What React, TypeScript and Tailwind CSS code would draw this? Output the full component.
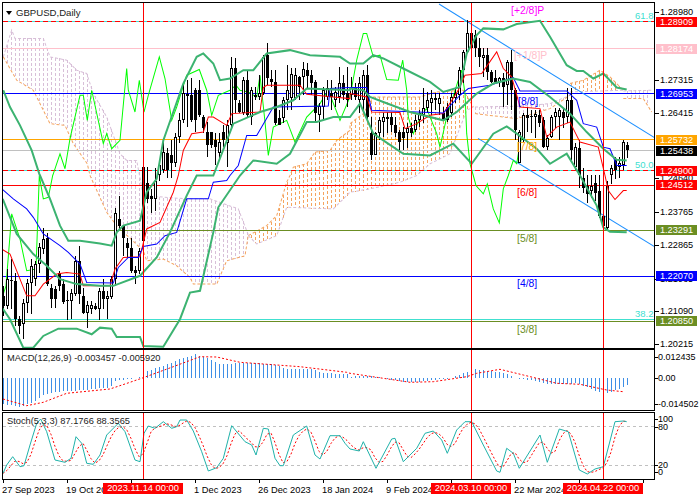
import React from "react";

type P = [number, number];
const seg = (ox: number, oy: number, a: number[]): P[] => {
  const r: P[] = [];
  for (let i = 0; i < a.length; i += 2) r.push([ox + a[i] / 3, oy + a[i + 1] / 3]);
  return r;
};
const str = (p: P[]) => p.map((q) => `${q[0].toFixed(1)},${q[1].toFixed(1)}`).join(" ");
const interp = (p: P[], x: number) => {
  if (x <= p[0][0]) return p[0][1];
  for (let i = 1; i < p.length; i++) {
    if (x <= p[i][0]) {
      const d = p[i][0] - p[i - 1][0];
      return d === 0 ? p[i][1] : p[i - 1][1] + ((p[i][1] - p[i - 1][1]) * (x - p[i - 1][0])) / d;
    }
  }
  return p[p.length - 1][1];
};

const upper = [
  ...seg(0, 0, [10, 270, 30, 320, 60, 375, 95, 450, 118, 520]),
  ...seg(0, 175, [120, 0, 150, 70, 180, 150, 205, 195, 240, 195, 300, 203, 335, 210, 350, 170, 370, 150, 420, 135, 440, 50, 470, 10]),
  ...seg(0, 0, [490, 420, 550, 250, 590, 170, 610, 160, 640, 190, 660, 240, 690, 235, 730, 210, 760, 210, 800, 160, 870, 150, 930, 165, 1020, 170, 1050, 190]),
  ...seg(350, 0, [0, 190, 40, 190, 70, 165, 100, 175, 160, 205, 240, 245, 280, 275, 330, 260, 350, 160, 380, 105, 400, 85, 460, 88, 500, 72, 570, 62, 600, 110, 650, 195, 680, 212, 700, 212, 730, 235, 760, 220, 800, 262, 830, 268]),
];
const middle = [
  ...seg(0, 175, [8, 70, 50, 175, 100, 235, 140, 270, 180, 310, 230, 325, 300, 330, 340, 330, 420, 300, 470, 245, 510, 170, 560, 60, 590, 0]),
  ...seg(0, 0, [640, 440 + 85, 700, 370, 780, 335, 830, 320, 880, 300, 920, 265, 1050, 270]),
  ...seg(350, 0, [0, 265, 40, 270, 60, 290, 100, 305, 180, 335, 280, 360, 320, 335, 380, 280, 430, 250, 490, 235, 540, 245, 600, 290, 660, 340, 710, 395, 760, 445, 800, 478, 830, 480]),
];
const lower = [
  ...seg(0, 175, [8, 398, 30, 430, 70, 515, 100, 515, 130, 480, 175, 458, 230, 458, 275, 475, 300, 455, 335, 458, 350, 483, 420, 483, 430, 510, 490, 512, 540, 430, 570, 350, 600, 345, 640, 170, 655, 95, 720, 0]),
  ...seg(0, 0, [760, 480, 830, 490, 870, 460, 920, 365, 950, 365, 1000, 350, 1050, 350]),
  ...seg(350, 0, [0, 350, 30, 310, 70, 400, 100, 420, 160, 460, 240, 465, 310, 430, 365, 490, 430, 400, 470, 378, 500, 400, 560, 445, 600, 490, 650, 460, 690, 525]),
  ...seg(350, 175, [740, 90, 760, 155, 780, 168, 830, 170]),
];
const tenkan = [
  ...seg(0, 175, [8, 222, 30, 235, 60, 310, 80, 360, 105, 360, 130, 325, 170, 295, 200, 290, 240, 295, 250, 330, 330, 330, 345, 280, 370, 245, 420, 243, 440, 160, 480, 140, 520, 50, 535, 0]),
  ...seg(0, 0, [550, 450, 575, 400, 610, 395, 625, 350, 640, 350, 680, 375, 695, 340, 780, 335, 790, 262, 800, 255, 900, 255, 920, 282, 1000, 290, 1050, 295]),
  ...seg(350, 0, [0, 280, 50, 290, 65, 335, 150, 337, 165, 385, 200, 370, 240, 345, 280, 340, 325, 270, 345, 225, 395, 220, 440, 155, 460, 205, 485, 230, 510, 320, 570, 325, 590, 410, 620, 380, 660, 365, 690, 425, 745, 440, 765, 525]),
  ...seg(350, 175, [775, 45, 795, 72, 820, 45, 830, 45]),
];
const kijun = [
  ...seg(0, 175, [8, 42, 40, 70, 80, 100, 100, 125, 130, 175, 180, 210, 205, 230, 240, 265, 260, 320, 340, 322, 355, 275, 385, 245, 415, 245, 430, 212, 470, 205, 495, 180, 530, 170, 560, 70, 625, 70, 640, 20, 680, 15, 690, 0]),
  ...seg(0, 0, [715, 495, 740, 405, 770, 405, 820, 320, 985, 317, 990, 265, 1050, 262]),
  ...seg(350, 0, [0, 262, 50, 262, 65, 330, 280, 338, 330, 285, 355, 265, 420, 255, 490, 232, 510, 272, 650, 272, 680, 300, 700, 370, 740, 380, 760, 440, 780, 445, 800, 495, 830, 495]),
];
const lime = [
  ...seg(0, 175, [8, 360, 18, 330, 35, 115, 60, 190, 80, 285, 108, 280, 118, 0, 130, 70, 145, 65, 158, 0]),
  ...seg(0, 0, [160, 520, 180, 460, 195, 505, 210, 415, 240, 285, 250, 285, 262, 360, 275, 270, 310, 430, 320, 400, 335, 445, 360, 420, 380, 205, 385, 270, 405, 335, 418, 240, 432, 335, 445, 285, 478, 170, 495, 235, 515, 360, 530, 320, 560, 225, 598, 208, 620, 270, 635, 345, 655, 285, 690, 270, 708, 255, 720, 270, 745, 275, 770, 290, 780, 225, 795, 365, 805, 465, 820, 380, 860, 360, 885, 425, 920, 350, 960, 310, 985, 270, 1020, 360, 1050, 290]),
  ...seg(350, 0, [20, 180, 40, 100, 50, 100, 70, 170, 90, 165, 110, 238, 145, 240, 158, 180, 170, 270, 175, 350, 190, 400, 215, 340, 230, 325, 260, 400, 270, 440, 290, 350, 325, 240, 335, 210, 345, 280, 350, 400, 360, 490, 370, 525]),
  ...seg(350, 175, [378, 30, 400, 55, 412, 25, 430, 100, 448, 142, 460, 40, 475, 0]),
  ...seg(350, 0, [490, 480, 500, 490, 510, 430, 520, 400]),
];

type Cloud = { up: P[]; lo: P[]; color: string; upColor: string; loColor: string };
const clouds: Cloud[] = [
  {
    up: [
      ...seg(0, 0, [10, 170, 35, 90, 45, 115, 130, 115, 150, 170, 200, 180, 230, 210, 260, 220, 280, 280, 320, 350, 360, 460, 380, 480, 410, 480]),
      ...seg(0, 175, [430, 60, 560, 70, 630, 70, 715, 100, 745, 178]),
    ],
    lo: [
      ...seg(0, 0, [10, 170, 50, 240, 100, 270, 150, 370, 195, 375, 220, 430, 262, 490]),
      ...seg(0, 175, [270, 0, 320, 110, 350, 150, 430, 225, 440, 255, 490, 250, 530, 270, 570, 305, 580, 325, 650, 325, 680, 255, 735, 240, 745, 178]),
    ],
    color: "#d8bfd8",
    upColor: "#d8bfd8",
    loColor: "#f4a460",
  },
  {
    up: [
      ...seg(0, 175, [745, 180, 800, 150, 830, 120, 860, 20, 870, 0]),
      ...seg(0, 0, [880, 500, 920, 490, 945, 455, 990, 450, 1010, 420, 1050, 390]),
      ...seg(350, 0, [0, 370, 40, 340, 70, 290, 210, 290, 260, 275, 340, 270, 370, 320]),
    ],
    lo: [
      ...seg(0, 175, [745, 180, 770, 205, 830, 180, 860, 95, 1000, 100, 1050, 50]),
      ...seg(350, 175, [60, 40, 150, 20, 200, 0]),
      ...seg(350, 0, [240, 490, 300, 460, 350, 330, 370, 320]),
    ],
    color: "#f4a460",
    upColor: "#f4a460",
    loColor: "#d8bfd8",
  },
  {
    up: seg(350, 0, [375, 320, 500, 318, 600, 310, 660, 285]),
    lo: seg(350, 0, [375, 340, 500, 355, 600, 325, 660, 285]),
    color: "#d8bfd8",
    upColor: "#d8bfd8",
    loColor: "#f4a460",
  },
  {
    up: seg(350, 0, [660, 250, 700, 240, 750, 210, 780, 230, 820, 270]),
    lo: seg(350, 0, [660, 275, 820, 270]),
    color: "#f4a460",
    upColor: "#f4a460",
    loColor: "#d8bfd8",
  },
  {
    up: seg(350, 0, [820, 272, 905, 270]),
    lo: seg(350, 0, [820, 295, 880, 295, 905, 335]),
    color: "#d8bfd8",
    upColor: "#d8bfd8",
    loColor: "#f4a460",
  },
];

const candleC = [
  10,360,390,0,330,420, 22,310,390,1,280,400, 34,312,316,0,250,400, 46,315,430,0,290,450, 58,430,450,0,420,475, 70,380,445,1,370,490,
  82,320,380,1,310,410, 94,270,320,1,250,415, 106,265,310,1,255,330, 118,212,265,1,200,290, 130,190,220,1,155,235, 142,185,325,0,170,330,
  154,335,370,0,325,395, 166,340,370,0,330,395, 178,290,330,0,285,345, 190,325,378,0,310,385, 202,372,376,0,345,432, 214,350,375,1,340,430,
  226,255,355,1,240,360, 238,255,355,0,210,385, 250,360,410,0,335,415, 262,388,410,1,375,455, 274,388,400,1,375,415, 286,390,398,0,380,402,
  298,345,398,1,335,432, 310,345,368,0,310,400, 322,360,368,1,345,430, 334,310,362,1,300,370, 346,110,310,1,95,330, 358,130,150,0,60,160,
  370,150,185,0,148,240, 382,200,215,0,185,245, 394,215,285,0,185,290, 406,282,290,0,270,325, 418,225,285,1,215,295, 430,-24,195,0,-30,225,
  442,20,70,0,-24,80, 454,60,68,0,40,110, 466,15,70,1,-20,105,
];
const candleA = [
  478,495,525,1,490,540, 490,455,510,1,425,520, 502,460,510,0,445,530, 514,465,490,0,420,530, 526,410,490,1,400,500, 538,360,410,1,340,430,
  550,280,360,1,250,370, 562,283,287,0,240,380, 574,285,360,0,235,365, 586,270,360,0,265,395, 598,270,345,0,240,350, 610,350,385,0,345,400,
  622,395,435,0,365,470, 634,395,435,0,395,445, 646,420,440,0,400,495, 658,425,460,1,400,475, 670,395,420,0,375,440, 682,375,430,1,360,500,
  694,205,375,1,170,380, 706,205,300,0,175,340, 718,310,335,0,300,340, 730,240,340,1,230,345, 742,240,345,0,210,350, 754,270,350,1,260,375,
  766,285,292,1,260,300, 778,280,290,1,225,300, 790,170,280,1,165,285, 802,165,235,0,130,255, 814,238,245,0,210,260, 826,245,370,0,210,375,
  838,355,375,0,330,375, 850,300,355,1,290,370, 862,270,300,1,195,330, 874,222,295,1,205,330, 886,225,295,1,205,300, 898,230,260,0,228,300,
  910,208,230,1,185,285, 922,210,228,0,190,265, 934,225,250,0,210,285, 946,245,340,0,240,370, 958,318,345,1,310,395, 970,270,320,1,260,360,
  982,265,290,1,240,300, 994,280,290,0,240,330, 1006,275,300,1,260,320, 1018,250,290,1,200,310, 1030,250,285,0,225,300, 1042,280,300,0,200,320,
];
const candleB = [
  4,265,285,1,230,300, 16,265,290,0,250,300, 28,250,300,1,230,340, 40,225,300,1,210,330, 52,225,350,0,195,365, 64,400,465,0,350,480,
  76,400,465,1,395,465, 88,360,400,1,350,420, 100,352,365,1,340,410, 112,350,356,0,335,400, 124,352,375,0,335,395, 136,375,400,0,350,410,
  148,395,425,0,390,450, 160,395,415,0,380,450, 172,385,400,1,370,445, 184,385,400,0,370,410, 196,360,390,1,345,395, 208,340,360,1,330,380,
  220,325,345,1,265,370, 232,300,325,1,275,340, 244,295,310,1,270,345, 256,293,300,0,280,330, 268,295,312,1,280,345, 280,340,360,0,320,360,
  292,320,360,0,310,365, 304,290,340,1,280,350, 316,280,295,1,265,310, 328,210,285,1,200,300, 340,155,210,1,150,250, 352,100,155,1,60,160,
  364,100,145,0,85,175, 376,105,145,0,90,170, 388,145,170,0,115,200, 400,165,175,1,145,230, 412,165,215,0,145,240, 424,215,245,0,210,250,
  436,235,245,0,210,250, 448,235,245,1,230,260, 460,235,260,0,220,320, 472,185,255,1,180,315, 484,185,270,0,150,330, 496,270,390,0,265,420,
  508,395,490,1,390,490, 520,345,420,1,340,425, 532,345,355,0,320,395, 544,348,352,0,330,400, 556,342,350,1,330,415, 568,345,370,0,330,380,
  580,360,440,0,350,445, 592,415,440,1,405,450, 604,350,410,1,345,415, 616,335,350,1,325,385, 628,330,350,1,325,420, 640,335,355,0,325,385,
  652,300,350,1,265,370, 664,300,450,0,265,480, 676,440,500,1,430,510, 688,445,525,0,420,560,
  700,530,560,0,505,575, 712,555,580,0,525,605, 724,555,570,1,525,590, 736,545,575,0,525,600, 748,570,645,0,525,650, 760,645,675,0,640,685,
  772,555,680,1,540,690, 784,505,525,1,495,550, 796,480,510,0,470,535, 808,490,500,1,470,530, 820,425,495,1,420,510, 832,435,450,0,425,475,
];
type C = { x: number; t: number; b: number; h: number; hi: number; lo: number };
const toC = (ox: number, oy: number, a: number[]): C[] => {
  const r: C[] = [];
  for (let i = 0; i < a.length; i += 6) {
    r.push({
      x: Math.round(ox + a[i] / 3),
      t: Math.round(oy + a[i + 1] / 3),
      b: Math.round(oy + a[i + 2] / 3),
      h: a[i + 3],
      hi: Math.round(oy + a[i + 4] / 3),
      lo: Math.round(oy + a[i + 5] / 3),
    });
  }
  return r;
};
const candles = [...toC(0, 175, candleC), ...toC(0, 0, candleA), ...toC(350, 0, candleB)];

const macdHist = [
  ...seg(0, 345, [9, 178, 60, 185, 100, 172, 130, 148, 180, 140, 250, 135, 330, 127, 345, 108, 400, 100, 430, 95, 442, 78, 490, 62, 540, 42, 585, 28, 620, 40, 660, 58, 700, 55, 780, 55, 830, 60, 860, 72, 940, 72, 960, 82, 1030, 88, 1045, 85]),
  ...seg(350, 345, [0, 95, 50, 92, 100, 98, 150, 110, 200, 112, 240, 105, 300, 100, 350, 80, 375, 72, 420, 78, 470, 85, 500, 100, 540, 105, 600, 118, 680, 115, 750, 143, 772, 143, 800, 135, 830, 120]),
];
const macdSig = [
  ...seg(0, 345, [9, 162, 80, 182, 130, 172, 200, 145, 330, 132, 390, 112, 430, 98, 520, 65, 600, 35, 650, 36, 720, 52, 900, 65, 1040, 82]),
  ...seg(350, 345, [0, 85, 100, 100, 180, 112, 250, 110, 350, 95, 380, 85, 450, 73, 520, 90, 560, 100, 620, 115, 690, 118, 770, 135, 820, 140]),
];
const stoch = [
  ...seg(0, 345, [9, 385, 20, 360, 38, 335, 60, 365, 72, 362, 90, 300, 110, 235, 122, 222, 140, 260, 165, 345, 195, 352, 213, 340, 228, 275, 245, 295, 260, 355, 280, 358, 300, 330, 320, 270, 355, 235, 375, 260, 405, 345, 420, 350, 432, 265, 445, 243, 465, 250, 490, 230, 515, 250, 530, 245, 540, 225, 560, 225, 580, 258, 605, 320, 625, 378, 650, 368, 670, 340, 695, 242, 735, 290, 755, 300, 768, 330, 790, 250, 805, 252, 825, 340, 840, 362, 850, 362, 880, 270, 920, 243, 945, 330, 960, 342, 990, 272, 1020, 272, 1035, 295]),
  ...seg(350, 345, [0, 312, 28, 318, 40, 290, 78, 370, 125, 282, 135, 280, 160, 350, 200, 310, 225, 265, 250, 258, 275, 285, 292, 325, 320, 255, 345, 230, 365, 230, 400, 300, 440, 378, 450, 382, 470, 310, 490, 325, 508, 370, 570, 270, 592, 352, 628, 252, 655, 260, 688, 375, 712, 387, 735, 372, 760, 365, 795, 230, 820, 228, 830, 230]),
];
const barXs: number[] = [];
for (let x = 3; x <= 650; x += 4) barXs.push(x);
const stochXs = barXs.filter((x) => x <= 627);
const stochSig: P[] = stochXs.map((x) => [x, (interp(stoch, x) + interp(stoch, x - 4) + interp(stoch, x - 8)) / 3]);

const vLines = [143, 471, 603];

const hLines = [
  { y: 21, c: "#40e0d0" },
  { y: 21, c: "#ff0000", dash: "5 3" },
  { y: 48, c: "#ffc0cb" },
  { y: 93, c: "#0000ff" },
  { y: 139, c: "#ffa500" },
  { y: 150, c: "#c0c0c0" },
  { y: 170, c: "#40e0d0" },
  { y: 170, c: "#ff0000", dash: "5 3" },
  { y: 184, c: "#ff0000" },
  { y: 229, c: "#6b8e23" },
  { y: 275, c: "#0000ff" },
  { y: 318, c: "#40e0d0" },
  { y: 320, c: "#6b8e23" },
];

const murrey = [
  { t: "[+2/8]P", x: 511, y: 14, c: "#ff00ff" },
  { t: "[+1/8]P", x: 514, y: 59, c: "#ffc0cb" },
  { t: "[8/8]", x: 518, y: 105, c: "#0000ff" },
  { t: "[7/8]", x: 517, y: 150, c: "#ffa500" },
  { t: "[6/8]", x: 517, y: 195, c: "#ff0000" },
  { t: "[5/8]", x: 517, y: 241, c: "#6b8e23" },
  { t: "[4/8]", x: 517, y: 286, c: "#0000ff" },
  { t: "[3/8]", x: 517, y: 332, c: "#6b8e23" },
];
const fibs = [
  { t: "61.8", y: 19 },
  { t: "50.0", y: 168 },
  { t: "38.2", y: 316 },
];

const plainPrices = [
  ["1.28980", 12],
  ["1.27315", 80],
  ["1.26415", 113],
  ["1.24640", 178],
  ["1.23765", 212],
  ["1.22865", 245],
  ["1.21965", 279],
  ["1.21090", 311],
  ["1.20215", 344],
] as [string, number][];
const tagPrices = [
  ["1.28909", 21, "bg-[#ff0000]"],
  ["1.28174", 48, "bg-[#ffc0cb]"],
  ["1.26953", 93, "bg-[#0000ff]"],
  ["1.25732", 139, "bg-[#ffa500]"],
  ["1.25438", 150, "bg-[#000000]"],
  ["1.24900", 170, "bg-[#ff0000]"],
  ["1.24512", 184, "bg-[#ff0000]"],
  ["1.23291", 229, "bg-[#6b8e23]"],
  ["1.22070", 275, "bg-[#0000ff]"],
  ["1.20850", 320, "bg-[#6b8e23]"],
] as [string, number, string][];

const timeCells = ["27 Sep 2023", "19 Oct 2023", "", "1 Dec 2023", "26 Dec 2023", "18 Jan 2024", "9 Feb 2024", "", "22 Mar 2024", "", ""];
const redTimes = [
  ["2023.11.14 00:00", 103],
  ["2024.03.10 00:00", 431],
  ["2024.04.22 00:00", 563],
] as [string, number][];

function Verticals({ y0, y1 }: { y0: number; y1: number }) {
  return (
    <g shapeRendering="crispEdges">
      {vLines.map((x) => (
        <line key={x} x1={x + 0.5} x2={x + 0.5} y1={y0} y2={y1} stroke="#ff0000" strokeWidth={1} />
      ))}
    </g>
  );
}

function MainChart() {
  return (
    <svg viewBox="3 3 651 344" className="block h-full w-full" preserveAspectRatio="none">
      {clouds.map((cl, i) => {
        const x0 = cl.up[0][0];
        const x1 = cl.up[cl.up.length - 1][0];
        return (
          <g key={i} fill="none" strokeWidth={1}>
            <g shapeRendering="crispEdges">
              {barXs
                .filter((x) => x >= x0 && x <= x1)
                .map((x) => (
                  <line key={x} x1={x + 0.5} x2={x + 0.5} y1={Math.round(interp(cl.up, x))} y2={Math.round(interp(cl.lo, x))} stroke={cl.color} strokeDasharray="3 2" />
                ))}
            </g>
            <polyline points={str(cl.up)} stroke={cl.upColor} strokeDasharray="3 2" />
            <polyline points={str(cl.lo)} stroke={cl.loColor} strokeDasharray="3 2" />
          </g>
        );
      })}
      <g shapeRendering="crispEdges">
        {hLines.map((l, i) => (
          <line key={i} x1={3} x2={654} y1={l.y + 0.5} y2={l.y + 0.5} stroke={l.c} strokeDasharray={l.dash} />
        ))}
      </g>
      <line x1={439} y1={4} x2={654} y2={137} stroke="#1e90ff" />
      <line x1={478} y1={138} x2={654} y2={245.7} stroke="#1e90ff" />
      <polyline points={str(lime)} fill="none" stroke="#00ff00" />
      <g shapeRendering="crispEdges">
        {candles.map((c, i) => (
          <g key={i}>
            <line x1={c.x + 0.5} x2={c.x + 0.5} y1={c.hi} y2={c.lo} stroke="#000" />
            {c.h ? (
              <rect x={c.x - 0.5} y={c.t + 0.5} width={2} height={Math.max(c.b - c.t - 1, 1)} fill="#fff" stroke="#000" />
            ) : (
              <rect x={c.x - 1} y={c.t} width={3} height={Math.max(c.b - c.t, 1)} fill="#000" />
            )}
          </g>
        ))}
      </g>
      <polyline points={str(tenkan)} fill="none" stroke="#ff0000" />
      <polyline points={str(kijun)} fill="none" stroke="#0000ff" />
      <polyline points={str(upper)} fill="none" stroke="#3cb371" strokeWidth={2} />
      <polyline points={str(middle)} fill="none" stroke="#3cb371" strokeWidth={2} />
      <polyline points={str(lower)} fill="none" stroke="#3cb371" strokeWidth={2} />
      <Verticals y0={3} y1={347} />
      {murrey.map((m) => (
        <text key={m.t} x={m.x} y={m.y} fill={m.c} fontSize={10.4}>
          {m.t}
        </text>
      ))}
      {fibs.map((f) => (
        <text key={f.t} x={635} y={f.y} fill="#40e0d0" fontSize={9.5}>
          {f.t}
        </text>
      ))}
    </svg>
  );
}

function MacdChart() {
  return (
    <svg viewBox="3 350 651 60" className="block h-full w-full" preserveAspectRatio="none">
      <g shapeRendering="crispEdges">
        {stochXs.map((x) => (
          <line key={x} x1={x + 0.5} x2={x + 0.5} y1={378} y2={interp(macdHist, x)} stroke="#3f8fe6" />
        ))}
      </g>
      <polyline points={str(macdSig)} fill="none" stroke="#ff0000" strokeDasharray="2 2" />
      <Verticals y0={350} y1={410} />
    </svg>
  );
}

function StochChart() {
  return (
    <svg viewBox="3 413 651 66" className="block h-full w-full" preserveAspectRatio="none">
      <g shapeRendering="crispEdges">
        <line x1={3} x2={654} y1={426.5} y2={426.5} stroke="#c0c0c0" strokeDasharray="3 3" />
        <line x1={3} x2={654} y1={465.5} y2={465.5} stroke="#c0c0c0" strokeDasharray="3 3" />
      </g>
      <polyline points={str(stochSig)} fill="none" stroke="#ff0000" strokeDasharray="2 2" />
      <polyline points={str(stoch)} fill="none" stroke="#20b2aa" />
      <Verticals y0={413} y1={479} />
    </svg>
  );
}

function AxisTick({ y, top, label }: { y: number; top: number; label: string }) {
  return (
    <div className="absolute left-0 flex h-[10px] items-center" style={{ top: y - top - 5 }}>
      <span className="h-px w-[3px] bg-black" />
      <span className="text-[9px] leading-[10px] text-black">{label}</span>
    </div>
  );
}

export default function App() {
  return (
    <div className="relative flex h-[500px] w-[700px] flex-col overflow-hidden bg-white pl-[2px] pt-[2px] font-['Liberation_Sans',Arial,sans-serif]">
      <div className="flex h-[347px]">
        <div className="relative h-full w-[653px] border border-black">
          <MainChart />
          <div className="absolute left-[3px] top-[4px] flex items-center gap-[4px]">
            <span className="h-0 w-0 border-x-[3.5px] border-t-[4px] border-x-transparent border-t-black" />
            <span className="text-[9.6px] leading-[11px] text-[#222]">GBPUSD,Daily</span>
          </div>
        </div>
        <div className="relative flex-1">
          {plainPrices.map(([l, y]) => (
            <div key={l} className="absolute left-0 flex h-[10px] items-center" style={{ top: y - 2 - 5 }}>
              <span className="h-px w-[4px] bg-black" />
              <span className="ml-[1px] text-[9.2px] leading-[10px] text-black">{l}</span>
            </div>
          ))}
          {tagPrices.map(([l, y, c]) => (
            <div
              key={l}
              className={`absolute left-[1px] h-[10px] w-[41px] text-center text-[9.2px] leading-[10px] text-white ${c}`}
              style={{ top: y - 2 - 5 + 0.5 }}
            >
              {l}
            </div>
          ))}
        </div>
      </div>
      <div className="flex h-[62px]">
        <div className="relative h-full w-[653px] border border-black">
          <MacdChart />
          <span className="absolute left-[4px] top-[3px] whitespace-nowrap text-[9.3px] leading-[11px] text-[#222]">MACD(12,26,9) -0.003457 -0.005920</span>
        </div>
        <div className="relative flex-1">
          <AxisTick y={357} top={349} label="0.012435" />
          <AxisTick y={378} top={349} label="0.00" />
          <AxisTick y={404} top={349} label="-0.014502" />
        </div>
      </div>
      <div className="mt-px flex h-[68px]">
        <div className="relative h-full w-[653px] border border-black">
          <StochChart />
          <span className="absolute left-[4px] top-[3px] whitespace-nowrap text-[9.3px] leading-[11px] text-[#222]">Stoch(5,3,3) 87.1766 88.3565</span>
        </div>
        <div className="relative flex-1">
          <AxisTick y={419} top={412} label="100" />
          <AxisTick y={427} top={412} label="80" />
          <AxisTick y={465} top={412} label="20" />
          <AxisTick y={472} top={412} label="0" />
        </div>
      </div>
      <div className="relative flex h-[20px] pl-px">
        {timeCells.map((t, i) => (
          <div key={i} className="relative h-full w-16 shrink-0">
            <span className="block h-[3px] w-px bg-black" />
            <span className="ml-[-1px] mt-[2px] block whitespace-nowrap text-[9.3px] leading-[11px] text-black">{t}</span>
          </div>
        ))}
        {redTimes.map(([t, x]) => (
          <span
            key={t}
            className="absolute top-[3px] h-[11px] w-[80px] bg-[#ff0000] text-center text-[9.3px] leading-[11px] text-white"
            style={{ left: x - 2 }}
          >
            {t}
          </span>
        ))}
      </div>
    </div>
  );
}
